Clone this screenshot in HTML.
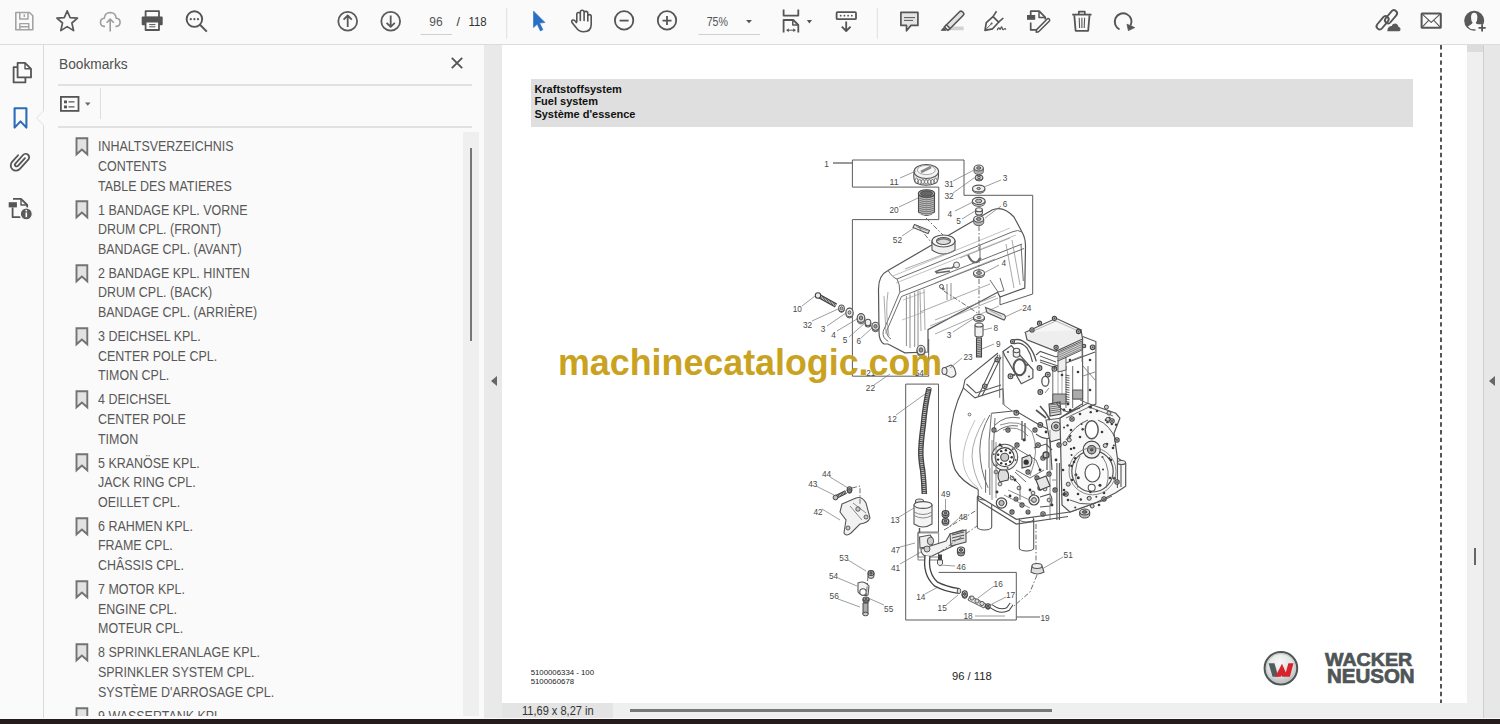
<!DOCTYPE html>
<html><head><meta charset="utf-8">
<style>
*{margin:0;padding:0;box-sizing:border-box}
html,body{width:1500px;height:724px;overflow:hidden;background:#fafafa;font-family:"Liberation Sans",sans-serif}
.abs{position:absolute}
svg{position:absolute;overflow:visible}
#toolbar{left:0;top:0;width:1500px;height:45px;background:#fafafa;border-bottom:1.5px solid #dcdcdc;z-index:5}
#rail{left:0;top:44px;width:44px;height:674px;background:#fafafa;border-right:1px solid #dadada}
#panel{left:44px;top:44px;width:440px;height:672px;background:#fafafa;overflow:hidden}
#divL{left:484px;top:44px;width:18px;height:674px;background:#e9e9e9}
#page{left:502px;top:44px;width:965px;height:659px;background:#fff;overflow:hidden}
#status{left:502px;top:703px;width:965px;height:15px;background:#efefef}
#vscroll{left:1467px;top:44px;width:17px;height:674px;background:#efefef;border-right:1px solid #cfcfcf}
#divR{left:1484px;top:44px;width:16px;height:674px;background:#e7e7e7}
#taskbar{left:0;top:718.5px;width:1500px;height:6px;background:#251b1c}
.bm{position:absolute;left:53.7px;font-size:14px;line-height:19.6px;color:#585858;white-space:nowrap;transform:scaleX(0.89);transform-origin:0 0}
.bmi{left:31px}
.ic{stroke:#666;fill:none;stroke-width:1.8}
</style></head><body>
<div id="toolbar" class="abs">
<svg style="left:0;top:0" width="1500" height="44" viewBox="0 0 1500 44">
<g fill="none" stroke-linejoin="round" stroke-linecap="butt">
<!-- save (disabled) -->
<path d="M15.8 12.5H29.5L32.8 15.8V29.8H15.8Z" stroke="#a3a3a3" stroke-width="1.6"/>
<path d="M19.8 12.5V18.9H28V12.5" stroke="#a3a3a3" stroke-width="1.5"/>
<path d="M24.3 14.3V17" stroke="#a3a3a3" stroke-width="1.5"/>
<path d="M19.8 29.8V23.6H28.8V29.8M19.8 26.7H28.8" stroke="#a3a3a3" stroke-width="1.4"/>
<!-- star -->
<path d="M67.2 10.8L70.1 17.6L77.5 18.1L71.9 23.0L73.6 30.6L67.2 26.6L60.8 30.6L62.5 23.0L56.9 18.1L64.3 17.6Z" stroke="#5a5a5a" stroke-width="1.7"/>
<!-- cloud upload -->
<path d="M105 26.4H104Q100.5 26.2 100.5 22.3Q100.6 18.6 104.2 18.3Q104.8 12.6 110.2 12.5Q115.7 12.6 116.3 18.3Q120 18.6 120.1 22.3Q120 26.2 116.5 26.4H115.5" stroke="#9d9d9d" stroke-width="1.6"/>
<path d="M110.2 31.6V19.2M106.6 22.7L110.2 19.1L113.8 22.7" stroke="#9d9d9d" stroke-width="1.6"/>
<!-- print -->
<rect x="145.6" y="11.2" width="13.4" height="6.4" stroke="#555" stroke-width="1.8"/>
<rect x="141.7" y="16.4" width="21" height="8.8" rx="1" fill="#555" stroke="none"/>
<rect x="145.6" y="21.6" width="13.4" height="8.4" fill="#fafafa" stroke="#555" stroke-width="1.8"/>
<path d="M149.2 24.6H155.4M149.2 26.8H155.4" stroke="#555" stroke-width="1"/>
<!-- search dots -->
<circle cx="194.4" cy="19.1" r="7.8" stroke="#555" stroke-width="1.9"/>
<path d="M200 24.8L206.8 31.6" stroke="#555" stroke-width="2"/>
<circle cx="190.8" cy="19.2" r="1.1" fill="#555" stroke="none"/>
<circle cx="194.4" cy="19.2" r="1.1" fill="#555" stroke="none"/>
<circle cx="198" cy="19.2" r="1.1" fill="#555" stroke="none"/>
<!-- up/down -->
<circle cx="347.7" cy="21.2" r="9.4" stroke="#5a5a5a" stroke-width="1.8"/>
<path d="M347.7 27V15.6M343.6 19.6L347.7 15.5L351.8 19.6" stroke="#5a5a5a" stroke-width="1.8"/>
<circle cx="390.7" cy="21.2" r="9.4" stroke="#5a5a5a" stroke-width="1.8"/>
<path d="M390.7 15.4V26.8M386.6 22.8L390.7 26.9L394.8 22.8" stroke="#5a5a5a" stroke-width="1.8"/>
<!-- page input -->
<path d="M420.7 34.5H452" stroke="#cfcfcf" stroke-width="1"/>
<path d="M506.7 8V38.7" stroke="#e0e0e0" stroke-width="1"/>
<!-- arrow cursor -->
<path d="M533.5 11L545 22.5L539.6 23.1L542.9 29.7L540.4 30.9L537.2 24.2L533.5 27.6Z" fill="#2a6fc4" stroke="#2a6fc4" stroke-width="0.6"/>
<!-- hand -->
<path d="M576.8 22V14.3A1.75 1.75 0 0 1 580.3 14.3V20.5V12.2A1.9 1.9 0 0 1 584.1 12.2V20.5V13.2A1.85 1.85 0 0 1 587.8 13.2V21V16.3A1.7 1.7 0 0 1 591.2 16.3V24.5Q591.2 31.8 583.6 31.8Q578.6 31.8 576 27.4L572 22.5Q571 20.6 572.9 20Q574.8 19.5 576.8 23.2" stroke="#555" stroke-width="1.6"/>
<!-- zoom out / in -->
<circle cx="624.1" cy="20.4" r="9.2" stroke="#555" stroke-width="1.8"/>
<path d="M619.6 20.6H628.6" stroke="#555" stroke-width="1.8"/>
<circle cx="667" cy="20.4" r="9.2" stroke="#555" stroke-width="1.8"/>
<path d="M662.5 20.6H671.5M667 16.1V25.1" stroke="#555" stroke-width="1.8"/>
<!-- zoom combo -->
<path d="M698.7 34.5H760" stroke="#cfcfcf" stroke-width="1"/>
<path d="M746 20H752L749 23.2Z" fill="#555" stroke="none"/>
<!-- fit page -->
<path d="M783.6 9.5V15.6H798.3V9.5" stroke="#555" stroke-width="1.8"/>
<path d="M783.6 32.6V20H793.3L798.3 25V32.6" stroke="#555" stroke-width="1.8"/>
<path d="M792.8 20.2V24.9H798" stroke="#555" stroke-width="1.5"/>
<path d="M787.2 30.2H794.8" stroke="#555" stroke-width="1"/>
<path d="M786.5 30.2L788.5 28.8V31.6Z M795.5 30.2L793.5 28.8V31.6Z" fill="#555" stroke="#555" stroke-width="0.6"/>
<path d="M806.8 20H812L809.4 23.4Z" fill="#555" stroke="none"/>
<!-- scroll -->
<rect x="836.6" y="12.2" width="19.4" height="7" rx="1" stroke="#555" stroke-width="1.8"/>
<g fill="#555" stroke="none"><circle cx="840.7" cy="15.7" r="0.9"/><circle cx="844.4" cy="15.7" r="0.9"/><circle cx="848.1" cy="15.7" r="0.9"/><circle cx="851.8" cy="15.7" r="0.9"/></g>
<path d="M846.2 21.4V30.8M841.8 26.6L846.2 31L850.6 26.6" stroke="#555" stroke-width="1.8"/>
<path d="M877.3 8V38.7" stroke="#e0e0e0" stroke-width="1"/>
<!-- comment -->
<path d="M900.9 12.3H917.9V25.4H911L906.5 30.8V25.4H900.9Z" fill="#e4e4e4" stroke="#555" stroke-width="1.7"/>
<path d="M904 17.6H915M904 20.4H913" stroke="#555" stroke-width="1"/>
<!-- highlighter -->
<path d="M947.5 30.2L963.6 30.2V26.4H951.4Z" fill="#d2d2d2" stroke="none"/>
<path d="M946.5 24.8L959.6 11.7Q961 10.4 962.3 11.7L963.4 12.8Q964.6 14 963.3 15.3L950.2 28.5Z" fill="#e2e2e2" stroke="#555" stroke-width="1.6"/>
<path d="M946.5 24.8L944.4 26.9L947.8 30.3L950.2 28.5" stroke="#555" stroke-width="1.6"/>
<path d="M943.6 27.6L941.2 30.4H946.2Z" fill="#555" stroke="#555" stroke-width="0.8"/>
<!-- pen sign -->
<path d="M985 30.3L986.3 22.6L993 16.6L998.6 22.2L992.6 28.8Z" stroke="#555" stroke-width="1.7"/>
<path d="M993 16.6L996.5 11.3M998.6 22.2L1003.3 18" stroke="#555" stroke-width="1.6"/>
<path d="M985.3 30L991.2 24" stroke="#555" stroke-width="1"/>
<circle cx="991.6" cy="23.4" r="1" fill="#555" stroke="none"/>
<path d="M997.2 30.2Q998.6 26.6 999.6 28.6Q1000.2 30.4 1001 27.6Q1001.8 25.8 1002.4 28.8Q1003 30.6 1004.4 28.8Q1005.2 28 1005.8 29.6" stroke="#555" stroke-width="1.2"/>
<!-- edit pdf -->
<path d="M1030.7 15V11.2H1039.2L1045.3 17.3V19.5" stroke="#555" stroke-width="1.7"/>
<path d="M1039 11.5V17.6H1045" stroke="#555" stroke-width="1.5"/>
<path d="M1030.7 22.6V29.9H1036.4" stroke="#555" stroke-width="1.7"/>
<rect x="1027" y="15" width="8.2" height="4.8" fill="#555" stroke="none"/>
<path d="M1036.6 29.6L1047.2 19Q1048.2 18 1049.2 19L1049.4 19.2Q1050.2 20.2 1049.2 21.2L1038.6 31.8L1036.2 32.2Z" stroke="#555" stroke-width="1.5"/>
<!-- trash -->
<path d="M1072.2 14.6H1091.5" stroke="#555" stroke-width="1.8"/>
<path d="M1078.8 14.2V11.6H1084.8V14.2" stroke="#555" stroke-width="1.7"/>
<path d="M1074.3 15.2L1075.6 30.8H1088.2L1089.5 15.2" stroke="#555" stroke-width="1.8"/>
<path d="M1079.2 17.8L1079.6 28M1081.9 17.8V28M1084.6 17.8L1084.2 28" stroke="#555" stroke-width="1.1"/>
<!-- rotate -->
<path d="M1119.5 29.3A8.4 8.4 0 1 1 1130.6 25.6" stroke="#555" stroke-width="1.9"/>
<path d="M1127 24.2L1134.7 27.6L1128.4 30.6Z" fill="#555" stroke="#555" stroke-width="0.8"/>
<!-- link cloud -->
<rect x="-7.6" y="-3.1" width="15.2" height="6.2" rx="3.1" transform="translate(1391 16.8) rotate(-50)" stroke="#555" stroke-width="1.9"/>
<rect x="-7.6" y="-3.1" width="15.2" height="6.2" rx="3.1" transform="translate(1382.6 22.8) rotate(-50)" stroke="#555" stroke-width="1.9"/>
<path d="M1387.4 31.3H1399.2Q1400.8 31 1400.5 28.8Q1400.2 26.9 1398.5 27Q1398 23.5 1394.8 23.5Q1392.2 23.7 1391.7 26Q1388.6 25.8 1387.8 28.5Q1387.2 30.4 1387.4 31.3Z" fill="#5a5a5a" stroke="none"/>
<!-- mail -->
<rect x="1421.6" y="13.4" width="19.2" height="14.4" rx="0.6" stroke="#555" stroke-width="2"/>
<path d="M1422 13.8L1431.2 22.4L1440.4 13.8M1422.2 27.2L1428.6 20.4M1440.2 27.2L1433.8 20.4" stroke="#555" stroke-width="1.1"/>
<!-- user add -->
<circle cx="1474.2" cy="20.8" r="10" fill="#595959" stroke="none"/>
<path d="M1474.2 12.8Q1477.2 12.8 1477.4 17.2Q1477.4 21 1475.8 22.6Q1476.2 24.4 1480.5 26.4Q1478 29.5 1474.2 29.2Q1470 29.5 1467.9 26.4Q1472.2 24.4 1472.6 22.6Q1471 21 1471 17.2Q1471.2 12.8 1474.2 12.8Z" fill="#fafafa" stroke="none"/>
<path d="M1476 24.2A5.5 5.5 0 0 0 1487 31.2L1487 24.2Z" fill="#fafafa" stroke="none"/>
<path d="M1482.1 24.3V31.5M1478.5 27.9H1485.7" stroke="#555" stroke-width="1.8"/>
</g>
<text x="429.3" y="26" font-family="Liberation Sans" font-size="12" fill="#555">96</text>
<text x="456.5" y="26.2" font-family="Liberation Sans" font-size="12.5" fill="#333">/</text>
<text x="468.5" y="26.2" font-family="Liberation Sans" font-size="12.5" fill="#333" textLength="18.2" lengthAdjust="spacingAndGlyphs">118</text>
<text x="706.7" y="25.6" font-family="Liberation Sans" font-size="12" fill="#555" textLength="21.3" lengthAdjust="spacingAndGlyphs">75%</text>
</svg>
</div>
<div id="rail" class="abs">
<svg style="left:0;top:0" width="44" height="240" viewBox="0 44 44 240">
<g fill="none" stroke="#555" stroke-width="1.8" stroke-linejoin="round">
<path d="M17.6 62.8H25L31 68.8V77.4H17.6Z"/>
<path d="M25 63V68.8H30.8" stroke-width="1.4"/>
<path d="M17.4 67.2H13.6V82.4H25.4V77.8"/>
<path d="M14.6 108.2H26.4V127.6L20.5 121.4L14.6 127.6Z" stroke="#2d6db8" stroke-width="2.1"/>
<path d="M5.5 5.5V16A1.75 1.75 0 0 1 2 16V4.5A3.5 3.5 0 0 1 9 4.5V17A5.25 5.25 0 0 1 -1.5 17V8" transform="translate(20 161) rotate(42) translate(-3.75 -11)" stroke-width="1.8" stroke-linecap="round"/>
<path d="M13 198.8H21L27.2 205V208"/>
<path d="M21 199V205H27" stroke-width="1.4"/>
<path d="M12.6 207.5V217.2H20.6"/>
</g>
<rect x="8.7" y="202.2" width="8.2" height="5.2" fill="#555"/>
<circle cx="26.3" cy="213.9" r="6" fill="#5a5a5a" stroke="#fafafa" stroke-width="1.2"/>
<path d="M26.3 212.4V217.2" stroke="#fff" stroke-width="1.6"/>
<circle cx="26.3" cy="210.6" r="0.9" fill="#fff"/>
</svg>
<svg style="left:35px;top:66px" width="9" height="16"><path d="M9 0.5L1.5 8L9 15.5" fill="#fafafa" stroke="#e2e2e2" stroke-width="1"/></svg>
</div>
<div id="panel" class="abs">
<div class="abs" style="left:15px;top:12px;font-size:14px;color:#4f4f4f;transform:scaleX(0.98);transform-origin:0 0">Bookmarks</div>
<svg style="left:407px;top:12.5px" width="12" height="12"><path d="M0.8 0.8L11.2 11.2M11.2 0.8L0.8 11.2" stroke="#555" stroke-width="1.9"/></svg>
<div class="abs" style="left:14px;top:39.5px;width:414px;height:2px;background:#e1e1e1"></div>
<svg style="left:16px;top:52px" width="34" height="17"><rect x="0.9" y="0.9" width="17.6" height="14" fill="none" stroke="#555" stroke-width="1.8"/><rect x="4" y="4.5" width="3" height="2.8" fill="#555"/><rect x="4" y="9.5" width="3" height="2.8" fill="#555"/><path d="M8.5 5.9H14.5M8.5 10.9H14.5" stroke="#555" stroke-width="1.3"/><path d="M25 6.5H30.5L27.75 9.7Z" fill="#666"/></svg>
<div class="abs" style="left:56px;top:44px;width:1px;height:31px;background:#dedede"></div>
<div class="abs" style="left:14px;top:81.5px;width:414px;height:2px;background:#e1e1e1"></div>
<div class="abs" style="left:419.4px;top:88px;width:15.4px;height:586px;background:#efefef"></div>
<div class="abs" style="left:426px;top:104px;width:2px;height:193px;background:#777"></div>
<svg class="bmi" style="top:93.2px" width="14" height="19" viewBox="0 0 14 19"><path d="M1.5 1.2H12.3V17.3L6.9 12.6L1.5 17.3Z" fill="#e2e2e2" stroke="#737373" stroke-width="1.9"/></svg>
<div class="bm" style="top:93.35px">INHALTSVERZEICHNIS<br>CONTENTS<br>TABLE DES MATIERES</div>
<svg class="bmi" style="top:156.4px" width="14" height="19" viewBox="0 0 14 19"><path d="M1.5 1.2H12.3V17.3L6.9 12.6L1.5 17.3Z" fill="#e2e2e2" stroke="#737373" stroke-width="1.9"/></svg>
<div class="bm" style="top:156.60px">1 BANDAGE KPL. VORNE<br>DRUM CPL. (FRONT)<br>BANDAGE CPL. (AVANT)</div>
<svg class="bmi" style="top:219.7px" width="14" height="19" viewBox="0 0 14 19"><path d="M1.5 1.2H12.3V17.3L6.9 12.6L1.5 17.3Z" fill="#e2e2e2" stroke="#737373" stroke-width="1.9"/></svg>
<div class="bm" style="top:219.85px">2 BANDAGE KPL. HINTEN<br>DRUM CPL. (BACK)<br>BANDAGE CPL. (ARRIÈRE)</div>
<svg class="bmi" style="top:282.9px" width="14" height="19" viewBox="0 0 14 19"><path d="M1.5 1.2H12.3V17.3L6.9 12.6L1.5 17.3Z" fill="#e2e2e2" stroke="#737373" stroke-width="1.9"/></svg>
<div class="bm" style="top:283.10px">3 DEICHSEL KPL.<br>CENTER POLE CPL.<br>TIMON CPL.</div>
<svg class="bmi" style="top:346.2px" width="14" height="19" viewBox="0 0 14 19"><path d="M1.5 1.2H12.3V17.3L6.9 12.6L1.5 17.3Z" fill="#e2e2e2" stroke="#737373" stroke-width="1.9"/></svg>
<div class="bm" style="top:346.35px">4 DEICHSEL<br>CENTER POLE<br>TIMON</div>
<svg class="bmi" style="top:409.4px" width="14" height="19" viewBox="0 0 14 19"><path d="M1.5 1.2H12.3V17.3L6.9 12.6L1.5 17.3Z" fill="#e2e2e2" stroke="#737373" stroke-width="1.9"/></svg>
<div class="bm" style="top:409.60px">5 KRANÖSE KPL.<br>JACK RING CPL.<br>OEILLET CPL.</div>
<svg class="bmi" style="top:472.7px" width="14" height="19" viewBox="0 0 14 19"><path d="M1.5 1.2H12.3V17.3L6.9 12.6L1.5 17.3Z" fill="#e2e2e2" stroke="#737373" stroke-width="1.9"/></svg>
<div class="bm" style="top:472.85px">6 RAHMEN KPL.<br>FRAME CPL.<br>CHÂSSIS CPL.</div>
<svg class="bmi" style="top:536.0px" width="14" height="19" viewBox="0 0 14 19"><path d="M1.5 1.2H12.3V17.3L6.9 12.6L1.5 17.3Z" fill="#e2e2e2" stroke="#737373" stroke-width="1.9"/></svg>
<div class="bm" style="top:536.10px">7 MOTOR KPL.<br>ENGINE CPL.<br>MOTEUR CPL.</div>
<svg class="bmi" style="top:599.2px" width="14" height="19" viewBox="0 0 14 19"><path d="M1.5 1.2H12.3V17.3L6.9 12.6L1.5 17.3Z" fill="#e2e2e2" stroke="#737373" stroke-width="1.9"/></svg>
<div class="bm" style="top:599.35px">8 SPRINKLERANLAGE KPL.<br>SPRINKLER SYSTEM CPL.<br>SYSTÈME D&#39;ARROSAGE CPL.</div>
<svg class="bmi" style="top:662.5px" width="14" height="19" viewBox="0 0 14 19"><path d="M1.5 1.2H12.3V17.3L6.9 12.6L1.5 17.3Z" fill="#e2e2e2" stroke="#737373" stroke-width="1.9"/></svg>
<div class="bm" style="top:662.60px">9 WASSERTANK KPL.</div>
</div>
<div id="divL" class="abs"><svg style="left:6.8px;top:332px" width="6" height="10"><path d="M6 0V10L0 5Z" fill="#666"/></svg></div>
<div id="page" class="abs"></div>
<div class="abs" style="left:530.6px;top:79px;width:882.7px;height:48px;background:#dfdfdf"></div>
<div class="abs" style="left:534.4px;top:82.7px;font-size:11px;line-height:12.8px;font-weight:bold;color:#111">Kraftstoffsystem<br>Fuel system<br>Système d&#39;essence</div>
<svg style="left:1440px;top:44px" width="2" height="659"><path d="M1 1V659" stroke="#555" stroke-width="2" stroke-dasharray="4.4 3.3"/></svg>
<div class="abs" style="left:530.7px;top:668px;font-size:7.8px;line-height:9.3px;color:#222">5100006334 - 100<br>5100060678</div>
<div class="abs" style="left:952px;top:670.2px;font-size:11.2px;line-height:12px;color:#222">96 / 118</div>
<div class="abs" style="left:1324.8px;top:651px;font-size:18.7px;line-height:17px;font-weight:bold;color:#4f5556;-webkit-text-stroke:0.7px #4f5556;transform:scaleX(1.05);transform-origin:0 0">WACKER</div>
<div class="abs" style="left:1326.7px;top:666.5px;font-size:19.5px;line-height:18px;font-weight:bold;color:#4f5556;-webkit-text-stroke:0.7px #4f5556;transform:scaleX(1.05);transform-origin:0 0">NEUSON</div>
<svg style="left:0;top:0" width="1500" height="724" viewBox="0 0 1500 724">
<defs><radialGradient id="rg" cx="0.45" cy="0.3" r="0.75"><stop offset="0" stop-color="#f7f7f7"/><stop offset="0.6" stop-color="#dcdfdf"/><stop offset="1" stop-color="#a9adae"/></radialGradient>
<clipPath id="wc"><rect x="1260" y="663.3" width="40" height="13.4"/></clipPath></defs>
<circle cx="1280.9" cy="668.2" r="16.3" fill="url(#rg)" stroke="#505556" stroke-width="2"/>
<circle cx="1280.9" cy="668.2" r="14.6" fill="none" stroke="#c4c7c8" stroke-width="1"/>
<g clip-path="url(#wc)">
<path d="M1270.6 660L1276.4 680" stroke="#545a5b" stroke-width="5.6" fill="none"/>
<path d="M1276.4 680L1281.8 669.5L1286.4 680L1291.8 660" stroke="#d8232a" stroke-width="5" fill="none" stroke-linejoin="miter" stroke-miterlimit="10"/>
</g>
</svg>

<svg style="left:0;top:0" width="1500" height="724" viewBox="0 0 1500 724" font-family="Liberation Sans">
<path d="M833 163H852.4M852.4 187.1V160H964V195.3H1032.7V294L1000 304.8V292" fill="none" stroke="#555" stroke-width="0.96" />
<path d="M852.4 187.1H938.8V219.6H852.4V376.2H928.7V339" fill="none" stroke="#555" stroke-width="0.96" />
<path d="M905.7 384.1H938.5V532M905.7 384.1V620H1016.3V572.4H938.6" fill="none" stroke="#555" stroke-width="0.96" />
<path d="M1016.3 617H1040" fill="none" stroke="#777" stroke-width="0.72" />
<path d="M918 532.9H938.6V558.3M918 532.9V560H938.6" fill="none" stroke="#666" stroke-width="0.84" />
<path d="M914 172Q913 180 916 183Q926 187.5 936 183Q939 180 938.5 172Z" fill="#e6e6e6" stroke="#555" stroke-width="1.08"/>
<ellipse cx="916.5" cy="180.5" rx="1.5" ry="2.3" fill="#fafafa" stroke="#666" stroke-width="0.84"/>
<ellipse cx="919.7" cy="181.8" rx="1.5" ry="2.3" fill="#fafafa" stroke="#666" stroke-width="0.84"/>
<ellipse cx="922.9" cy="181.8" rx="1.5" ry="2.3" fill="#fafafa" stroke="#666" stroke-width="0.84"/>
<ellipse cx="926.1" cy="181.8" rx="1.5" ry="2.3" fill="#fafafa" stroke="#666" stroke-width="0.84"/>
<ellipse cx="929.3" cy="181.8" rx="1.5" ry="2.3" fill="#fafafa" stroke="#666" stroke-width="0.84"/>
<ellipse cx="932.5" cy="181.8" rx="1.5" ry="2.3" fill="#fafafa" stroke="#666" stroke-width="0.84"/>
<ellipse cx="935.7" cy="180.5" rx="1.5" ry="2.3" fill="#fafafa" stroke="#666" stroke-width="0.84"/>
<ellipse cx="926.3" cy="171.5" rx="12.3" ry="7" fill="#f2f2f2" stroke="#555" stroke-width="1.08"/>
<ellipse cx="926.3" cy="170" rx="9" ry="4.6" fill="#f8f8f8" stroke="#888" stroke-width="0.72"/>
<path d="M921 172L931 167" fill="none" stroke="#888" stroke-width="2.64" />
<path d="M918.5 194V212Q926.5 219 934.5 212V194Z" fill="#777" stroke="#444" stroke-width="1.08"/>
<path d="M918.8 197Q926.5 200.5 934.2 197" fill="none" stroke="#ccc" stroke-width="0.84" />
<path d="M918.8 199Q926.5 202.5 934.2 199" fill="none" stroke="#ccc" stroke-width="0.84" />
<path d="M918.8 201Q926.5 204.5 934.2 201" fill="none" stroke="#ccc" stroke-width="0.84" />
<path d="M918.8 203Q926.5 206.5 934.2 203" fill="none" stroke="#ccc" stroke-width="0.84" />
<path d="M918.8 205Q926.5 208.5 934.2 205" fill="none" stroke="#ccc" stroke-width="0.84" />
<path d="M918.8 207Q926.5 210.5 934.2 207" fill="none" stroke="#ccc" stroke-width="0.84" />
<path d="M918.8 209Q926.5 212.5 934.2 209" fill="none" stroke="#ccc" stroke-width="0.84" />
<path d="M918.8 211Q926.5 214.5 934.2 211" fill="none" stroke="#ccc" stroke-width="0.84" />
<path d="M918.8 213Q926.5 216.5 934.2 213" fill="none" stroke="#ccc" stroke-width="0.84" />
<ellipse cx="926.5" cy="193.5" rx="8.2" ry="3.8" fill="#aaa" stroke="#444" stroke-width="1.08"/>
<ellipse cx="926.5" cy="193.5" rx="6" ry="2.6" fill="#666" stroke="#444" stroke-width="0.96"/>
<path d="M914.5 224.5L929.5 230.5L928 233.5L913 227.5Z" fill="#f2f2f2" stroke="#555" stroke-width="1.08"/>
<path d="M916 226.5L927.5 231" fill="none" stroke="#777" stroke-width="0.72" />
<path d="M926 218 L943 235" fill="none" stroke="#666" stroke-width="0.96" stroke-dasharray="5 2 1.5 2"/>
<path d="M918 226 L935 247" fill="none" stroke="#666" stroke-width="0.96" stroke-dasharray="5 2 1.5 2"/>
<path d="M884 344Q879 341 879 332L878.5 289Q878.5 275 888 270.5L992 210Q1003 205 1014 217L1022 232Q1025.5 238 1025.5 246L1024.8 288L1000 297L997.6 292.3L928 329.6L928 352L904.8 352.8L888 344Z" fill="#fff" stroke="#555" stroke-width="1.20" />
<path d="M888 270.5Q893 278 897 279L1012 232Q1018 229 1022 232" fill="none" stroke="#666" stroke-width="0.96" />
<path d="M897 279Q900 284 899.8 292.3" fill="none" stroke="#666" stroke-width="0.96" />
<path d="M899.8 292.3L1022 244M901.5 296.5L1024 248.5" fill="none" stroke="#666" stroke-width="0.96" />
<path d="M899.8 292.3L883.2 331.3Q882 338 888.2 341.2M901.5 296.5L887 330Q886 336 891 339" fill="none" stroke="#666" stroke-width="0.96" />
<path d="M906.4 296V346M910 294.5V348M914.7 292.5V347M918 291V346" fill="none" stroke="#777" stroke-width="0.84" />
<path d="M920 290.5L921 331M924 289L925 330" fill="none" stroke="#888" stroke-width="0.72" />
<path d="M905 269L955 250M960 258L1010 238M935 283L995 259" fill="none" stroke="#888" stroke-width="0.72" />
<path d="M920 312L990 284M935 320L996 296" fill="none" stroke="#888" stroke-width="0.72" />
<path d="M932 241V250Q943.5 258 955 250V241Z" fill="#f0f0f0" stroke="#555" stroke-width="1.08"/>
<ellipse cx="943.5" cy="241" rx="11.5" ry="6" fill="#f6f6f6" stroke="#555" stroke-width="1.08"/>
<ellipse cx="943.5" cy="241" rx="7" ry="3.5" fill="#ddd" stroke="#555" stroke-width="1.08"/>
<path d="M937 240.5Q943.5 237 950 240.5" stroke="#777" stroke-width="1.44" fill="none"/>
<path d="M935 272Q943 268 952 268L957 264M936 273Q944 272 950 271" fill="none" stroke="#666" stroke-width="1.68" />
<circle cx="956.5" cy="265" r="3" fill="#eee" stroke="#555" stroke-width="0.96"/>
<path d="M968 255Q972 264 977 262L981 258" fill="none" stroke="#666" stroke-width="1.92" />
<path d="M980 245V258" fill="none" stroke="#666" stroke-width="0.96" />
<path d="M973.5 273V274.5A5.5 3.2 0 0 0 984.5 274.5V273" fill="#ddd" stroke="#555" stroke-width="0.96"/>
<ellipse cx="979" cy="273" rx="5.5" ry="3.2" fill="#f2f2f2" stroke="#555" stroke-width="1.08"/>
<ellipse cx="979" cy="273" rx="2.475" ry="1.4400000000000002" fill="#bbb" stroke="#555" stroke-width="0.96"/>
<path d="M990 280L998 292L1004 290.7L1000 278" fill="none" stroke="#666" stroke-width="0.96" />
<path d="M940 285L944 290" fill="none" stroke="#777" stroke-width="2.64" />
<circle cx="941.5" cy="286.5" r="2" fill="#eee" stroke="#555" stroke-width="0.96"/>
<path d="M944 291 L979 314" fill="none" stroke="#666" stroke-width="0.96" stroke-dasharray="5 2 1.5 2"/>
<path d="M1021 244L1023.3 281" fill="none" stroke="#666" stroke-width="0.96" />
<path d="M884 296L886 334M888 292Q885 310 889 336" fill="none" stroke="#888" stroke-width="0.72" />
<path d="M893 276L1010 228M896 283L1016 235" fill="none" stroke="#999" stroke-width="0.60" />
<path d="M930 326L998 298M935 334L999 306" fill="none" stroke="#888" stroke-width="0.72" />
<path d="M903 300L925 292M902 320L924 312" fill="none" stroke="#999" stroke-width="0.60" />
<path d="M1012 240L1020 285M1006 244L1014 288" fill="none" stroke="#888" stroke-width="0.72" />
<path d="M947 284V300M951 283V299" fill="none" stroke="#777" stroke-width="0.84" />
<path d="M974.1 168V171.4A4.6 3 0 0 0 983.3000000000001 171.4V168" fill="#b4b4b4" stroke="#555" stroke-width="0.96"/>
<ellipse cx="978.7" cy="168" rx="4.6" ry="3" fill="#e2e2e2" stroke="#555" stroke-width="1.08"/>
<ellipse cx="978.7" cy="168" rx="2.07" ry="1.35" fill="#999" stroke="#555" stroke-width="0.96"/>
<path d="M975.2 177.5V178.5A3.8 2.4 0 0 0 982.8 178.5V177.5" fill="#ddd" stroke="#555" stroke-width="0.96"/>
<ellipse cx="979" cy="177.5" rx="3.8" ry="2.4" fill="#f2f2f2" stroke="#555" stroke-width="1.08"/>
<ellipse cx="979" cy="177.5" rx="1.71" ry="1.08" fill="#bbb" stroke="#555" stroke-width="0.96"/>
<path d="M972.5 188.5V189.9A6.2 3.4 0 0 0 984.9000000000001 189.9V188.5" fill="#ddd" stroke="#555" stroke-width="0.96"/>
<ellipse cx="978.7" cy="188.5" rx="6.2" ry="3.4" fill="#f2f2f2" stroke="#555" stroke-width="1.08"/>
<ellipse cx="978.7" cy="188.5" rx="1.8599999999999999" ry="1.02" fill="#bbb" stroke="#555" stroke-width="0.96"/>
<path d="M972.3000000000001 201V202.8A6.4 3.6 0 0 0 985.1 202.8V201" fill="#ddd" stroke="#555" stroke-width="0.96"/>
<ellipse cx="978.7" cy="201" rx="6.4" ry="3.6" fill="#f2f2f2" stroke="#555" stroke-width="1.08"/>
<ellipse cx="978.7" cy="201" rx="3.2" ry="1.8" fill="#bbb" stroke="#555" stroke-width="0.96"/>
<path d="M975.6 209.8V213.0A3.4 2 0 0 0 982.4 213.0V209.8" fill="#f0f0f0" stroke="#555" stroke-width="1.08"/>
<ellipse cx="979" cy="209.8" rx="3.4" ry="2" fill="#f0f0f0" stroke="#555" stroke-width="1.08"/>
<path d="M973.7 219V222.4A5 3.2 0 0 0 983.7 222.4V219" fill="#b4b4b4" stroke="#555" stroke-width="0.96"/>
<ellipse cx="978.7" cy="219" rx="5" ry="3.2" fill="#e2e2e2" stroke="#555" stroke-width="1.08"/>
<ellipse cx="978.7" cy="219" rx="2.25" ry="1.4400000000000002" fill="#999" stroke="#555" stroke-width="0.96"/>
<path d="M979 226 L979 250" fill="none" stroke="#666" stroke-width="0.96" stroke-dasharray="5 2 1.5 2"/>
<path d="M979 258 L979 320" fill="none" stroke="#666" stroke-width="0.96" stroke-dasharray="5 2 1.5 2"/>
<path d="M818 295.5L836 305.5" stroke="#444" stroke-width="4.32" stroke-linecap="butt"/>
<path d="M818 295.5L836 305.5" stroke="#ddd" stroke-width="2.16" stroke-dasharray="0.8 0.8"/>
<circle cx="818" cy="295.5" r="2.7" fill="#eee" stroke="#444" stroke-width="1.08"/>
<path d="M838.7 308.3V309.1A2.8 3.3 0 0 0 844.3 309.1V308.3" fill="#ddd" stroke="#555" stroke-width="0.96"/>
<ellipse cx="841.5" cy="308.3" rx="2.8" ry="3.3" fill="#f2f2f2" stroke="#555" stroke-width="1.08"/>
<ellipse cx="841.5" cy="308.3" rx="1.26" ry="1.4849999999999999" fill="#bbb" stroke="#555" stroke-width="0.96"/>
<path d="M845.9 312.5V313.5A3.6 4.4 0 0 0 853.1 313.5V312.5" fill="#ddd" stroke="#555" stroke-width="0.96"/>
<ellipse cx="849.5" cy="312.5" rx="3.6" ry="4.4" fill="#f2f2f2" stroke="#555" stroke-width="1.08"/>
<ellipse cx="849.5" cy="312.5" rx="1.4400000000000002" ry="1.7600000000000002" fill="#bbb" stroke="#555" stroke-width="0.96"/>
<path d="M857.2 318V319.5A3.8 4.4 0 0 0 864.8 319.5V318" fill="#b4b4b4" stroke="#555" stroke-width="0.96"/>
<ellipse cx="861" cy="318" rx="3.8" ry="4.4" fill="#e2e2e2" stroke="#555" stroke-width="1.08"/>
<ellipse cx="861" cy="318" rx="1.71" ry="1.9800000000000002" fill="#999" stroke="#555" stroke-width="0.96"/>
<path d="M865.2 322.5V323.7A2.8 3.3 0 0 0 870.8 323.7V322.5" fill="#eee" stroke="#555" stroke-width="1.08"/>
<ellipse cx="868" cy="322.5" rx="2.8" ry="3.3" fill="#eee" stroke="#555" stroke-width="1.08"/>
<path d="M871.9 326.3V327.8A3.6 4 0 0 0 879.1 327.8V326.3" fill="#b4b4b4" stroke="#555" stroke-width="0.96"/>
<ellipse cx="875.5" cy="326.3" rx="3.6" ry="4" fill="#e2e2e2" stroke="#555" stroke-width="1.08"/>
<ellipse cx="875.5" cy="326.3" rx="1.62" ry="1.8" fill="#999" stroke="#555" stroke-width="0.96"/>
<path d="M917 350V351.6A4 4.8 0 0 0 925 351.6V350" fill="#b4b4b4" stroke="#555" stroke-width="0.96"/>
<ellipse cx="921" cy="350" rx="4" ry="4.8" fill="#e2e2e2" stroke="#555" stroke-width="1.08"/>
<ellipse cx="921" cy="350" rx="1.8" ry="2.16" fill="#999" stroke="#555" stroke-width="0.96"/>
<path d="M985.5 307.5L1004 314.5Q1007 317 1004 320L987 312.5Z" fill="#e4e4e4" stroke="#555" stroke-width="1.08"/>
<path d="M989 310L1002 316.5" fill="none" stroke="#888" stroke-width="0.72" />
<path d="M973.5 317.5V319.0A5.5 3 0 0 0 984.5 319.0V317.5" fill="#ddd" stroke="#555" stroke-width="0.96"/>
<ellipse cx="979" cy="317.5" rx="5.5" ry="3" fill="#f2f2f2" stroke="#555" stroke-width="1.08"/>
<ellipse cx="979" cy="317.5" rx="1.9249999999999998" ry="1.0499999999999998" fill="#bbb" stroke="#555" stroke-width="0.96"/>
<path d="M975 325V335A4 2 0 0 0 983 335V325" fill="#f2f2f2" stroke="#555" stroke-width="1.08"/>
<ellipse cx="979" cy="325" rx="4" ry="2" fill="#f2f2f2" stroke="#555" stroke-width="1.08"/>
<path d="M976.5 338H981.5V357H976.5Z" fill="#bbb" stroke="#444" stroke-width="1.08"/>
<path d="M976.5 340.0L981.5 341.0" fill="none" stroke="#444" stroke-width="0.72" />
<path d="M976.5 342.2L981.5 343.2" fill="none" stroke="#444" stroke-width="0.72" />
<path d="M976.5 344.4L981.5 345.4" fill="none" stroke="#444" stroke-width="0.72" />
<path d="M976.5 346.6L981.5 347.6" fill="none" stroke="#444" stroke-width="0.72" />
<path d="M976.5 348.8L981.5 349.8" fill="none" stroke="#444" stroke-width="0.72" />
<path d="M976.5 351.0L981.5 352.0" fill="none" stroke="#444" stroke-width="0.72" />
<path d="M976.5 353.2L981.5 354.2" fill="none" stroke="#444" stroke-width="0.72" />
<path d="M976.5 355.4L981.5 356.4" fill="none" stroke="#444" stroke-width="0.72" />
<path d="M944 368L951 365Q955 367 955.5 372L956 374Q954 378 950 377L944 374Z" fill="#f2f2f2" stroke="#555" stroke-width="1.08"/>
<ellipse cx="944.5" cy="371" rx="2.5" ry="3.5" fill="#eee" stroke="#555" stroke-width="1.08"/>
<path d="M833 163L852 163" stroke="#777" stroke-width="0.72"/>
<path d="M900 178L916 171" stroke="#777" stroke-width="0.72"/>
<path d="M953 181L974 170" stroke="#777" stroke-width="0.72"/>
<path d="M953 193L974 178" stroke="#777" stroke-width="0.72"/>
<path d="M1001 180L984 187" stroke="#777" stroke-width="0.72"/>
<path d="M899 207L918 198" stroke="#777" stroke-width="0.72"/>
<path d="M955 211L973 202" stroke="#777" stroke-width="0.72"/>
<path d="M962 219L975 211" stroke="#777" stroke-width="0.72"/>
<path d="M1001 206L985 218" stroke="#777" stroke-width="0.72"/>
<path d="M902 236L914 228" stroke="#777" stroke-width="0.72"/>
<path d="M999 265L984 273" stroke="#777" stroke-width="0.72"/>
<path d="M802 306L815 296" stroke="#777" stroke-width="0.72"/>
<path d="M812 321L838 309" stroke="#777" stroke-width="0.72"/>
<path d="M827 326L846 313" stroke="#777" stroke-width="0.72"/>
<path d="M837 331L857 319" stroke="#777" stroke-width="0.72"/>
<path d="M849 337L865 323" stroke="#777" stroke-width="0.72"/>
<path d="M861 338L872 328" stroke="#777" stroke-width="0.72"/>
<path d="M1022 309L1005 317" stroke="#777" stroke-width="0.72"/>
<path d="M953 332L973 319" stroke="#777" stroke-width="0.72"/>
<path d="M992 328L983 330" stroke="#777" stroke-width="0.72"/>
<path d="M994 344L982 349" stroke="#777" stroke-width="0.72"/>
<path d="M962 358L950 368" stroke="#777" stroke-width="0.72"/>
<path d="M874 385L890 374" stroke="#777" stroke-width="0.72"/>
<path d="M896 415L925 394" stroke="#777" stroke-width="0.72"/>
<path d="M830 477L848 488" stroke="#777" stroke-width="0.72"/>
<path d="M816 486L834 495" stroke="#777" stroke-width="0.72"/>
<path d="M822 509L840 520" stroke="#777" stroke-width="0.72"/>
<path d="M899 517L914 508" stroke="#777" stroke-width="0.72"/>
<path d="M958 519L948 528" stroke="#777" stroke-width="0.72"/>
<path d="M900 547L915 543" stroke="#777" stroke-width="0.72"/>
<path d="M1063 557L1042 569" stroke="#777" stroke-width="0.72"/>
<path d="M848 560L866 571" stroke="#777" stroke-width="0.72"/>
<path d="M900 564L921 552" stroke="#777" stroke-width="0.72"/>
<path d="M955 566L940 565" stroke="#777" stroke-width="0.72"/>
<path d="M838 578L857 586" stroke="#777" stroke-width="0.72"/>
<path d="M994 586L978 598" stroke="#777" stroke-width="0.72"/>
<path d="M925 594L940 586" stroke="#777" stroke-width="0.72"/>
<path d="M1006 597L990 605" stroke="#777" stroke-width="0.72"/>
<path d="M838 599L860 607" stroke="#777" stroke-width="0.72"/>
<path d="M946 605L958 595" stroke="#777" stroke-width="0.72"/>
<path d="M884 605L868 598" stroke="#777" stroke-width="0.72"/>
<path d="M975 616L1005 616" stroke="#777" stroke-width="0.72"/>
<path d="M1016 617L1040 617" stroke="#777" stroke-width="0.72"/>
<text x="826.6" y="166.5" text-anchor="middle" font-size="9.6" textLength="4.6" lengthAdjust="spacingAndGlyphs" fill="#4a4a4a">1</text>
<text x="894" y="184.5" text-anchor="middle" font-size="9.6" textLength="9.2" lengthAdjust="spacingAndGlyphs" fill="#4a4a4a">11</text>
<text x="949" y="186.5" text-anchor="middle" font-size="9.6" textLength="9.2" lengthAdjust="spacingAndGlyphs" fill="#4a4a4a">31</text>
<text x="1005" y="181.1" text-anchor="middle" font-size="9.6" textLength="4.6" lengthAdjust="spacingAndGlyphs" fill="#4a4a4a">3</text>
<text x="949" y="199.1" text-anchor="middle" font-size="9.6" textLength="9.2" lengthAdjust="spacingAndGlyphs" fill="#4a4a4a">32</text>
<text x="894" y="212.9" text-anchor="middle" font-size="9.6" textLength="9.2" lengthAdjust="spacingAndGlyphs" fill="#4a4a4a">20</text>
<text x="949.8" y="216.7" text-anchor="middle" font-size="9.6" textLength="4.6" lengthAdjust="spacingAndGlyphs" fill="#4a4a4a">4</text>
<text x="958.5" y="224.3" text-anchor="middle" font-size="9.6" textLength="4.6" lengthAdjust="spacingAndGlyphs" fill="#4a4a4a">5</text>
<text x="1005" y="207.0" text-anchor="middle" font-size="9.6" textLength="4.6" lengthAdjust="spacingAndGlyphs" fill="#4a4a4a">6</text>
<text x="897.4" y="243.2" text-anchor="middle" font-size="9.6" textLength="9.2" lengthAdjust="spacingAndGlyphs" fill="#4a4a4a">52</text>
<text x="1003.7" y="265.7" text-anchor="middle" font-size="9.6" textLength="4.6" lengthAdjust="spacingAndGlyphs" fill="#4a4a4a">4</text>
<text x="797.3" y="312.3" text-anchor="middle" font-size="9.6" textLength="9.2" lengthAdjust="spacingAndGlyphs" fill="#4a4a4a">10</text>
<text x="807.6" y="327.8" text-anchor="middle" font-size="9.6" textLength="9.2" lengthAdjust="spacingAndGlyphs" fill="#4a4a4a">32</text>
<text x="823.1" y="332.3" text-anchor="middle" font-size="9.6" textLength="4.6" lengthAdjust="spacingAndGlyphs" fill="#4a4a4a">3</text>
<text x="1026.8" y="310.5" text-anchor="middle" font-size="9.6" textLength="9.2" lengthAdjust="spacingAndGlyphs" fill="#4a4a4a">24</text>
<text x="833.5" y="338.2" text-anchor="middle" font-size="9.6" textLength="4.6" lengthAdjust="spacingAndGlyphs" fill="#4a4a4a">4</text>
<text x="995.7" y="331.3" text-anchor="middle" font-size="9.6" textLength="4.6" lengthAdjust="spacingAndGlyphs" fill="#4a4a4a">8</text>
<text x="845" y="342.7" text-anchor="middle" font-size="9.6" textLength="4.6" lengthAdjust="spacingAndGlyphs" fill="#4a4a4a">5</text>
<text x="949" y="338.2" text-anchor="middle" font-size="9.6" textLength="4.6" lengthAdjust="spacingAndGlyphs" fill="#4a4a4a">3</text>
<text x="858.7" y="344.0" text-anchor="middle" font-size="9.6" textLength="4.6" lengthAdjust="spacingAndGlyphs" fill="#4a4a4a">6</text>
<text x="998.2" y="346.8" text-anchor="middle" font-size="9.6" textLength="4.6" lengthAdjust="spacingAndGlyphs" fill="#4a4a4a">9</text>
<text x="968.1" y="359.9" text-anchor="middle" font-size="9.6" textLength="9.2" lengthAdjust="spacingAndGlyphs" fill="#4a4a4a">23</text>
<text x="870.8" y="375.7" text-anchor="middle" font-size="9.6" textLength="9.2" lengthAdjust="spacingAndGlyphs" fill="#4a4a4a">21</text>
<text x="919.3" y="375.7" text-anchor="middle" font-size="9.6" textLength="9.2" lengthAdjust="spacingAndGlyphs" fill="#4a4a4a">54</text>
<text x="870.4" y="391.0" text-anchor="middle" font-size="9.6" textLength="9.2" lengthAdjust="spacingAndGlyphs" fill="#4a4a4a">22</text>
<text x="892.2" y="421.5" text-anchor="middle" font-size="9.6" textLength="9.2" lengthAdjust="spacingAndGlyphs" fill="#4a4a4a">12</text>
<text x="826.6" y="477.4" text-anchor="middle" font-size="9.6" textLength="9.2" lengthAdjust="spacingAndGlyphs" fill="#4a4a4a">44</text>
<text x="812.8" y="487.1" text-anchor="middle" font-size="9.6" textLength="9.2" lengthAdjust="spacingAndGlyphs" fill="#4a4a4a">43</text>
<text x="945.7" y="497.4" text-anchor="middle" font-size="9.6" textLength="9.2" lengthAdjust="spacingAndGlyphs" fill="#4a4a4a">49</text>
<text x="818" y="515.4" text-anchor="middle" font-size="9.6" textLength="9.2" lengthAdjust="spacingAndGlyphs" fill="#4a4a4a">42</text>
<text x="895" y="523.3" text-anchor="middle" font-size="9.6" textLength="9.2" lengthAdjust="spacingAndGlyphs" fill="#4a4a4a">13</text>
<text x="963" y="519.8" text-anchor="middle" font-size="9.6" textLength="9.2" lengthAdjust="spacingAndGlyphs" fill="#4a4a4a">48</text>
<text x="895.6" y="553.3" text-anchor="middle" font-size="9.6" textLength="9.2" lengthAdjust="spacingAndGlyphs" fill="#4a4a4a">47</text>
<text x="1068.2" y="557.8" text-anchor="middle" font-size="9.6" textLength="9.2" lengthAdjust="spacingAndGlyphs" fill="#4a4a4a">51</text>
<text x="843.9" y="560.5" text-anchor="middle" font-size="9.6" textLength="9.2" lengthAdjust="spacingAndGlyphs" fill="#4a4a4a">53</text>
<text x="895.6" y="570.5" text-anchor="middle" font-size="9.6" textLength="9.2" lengthAdjust="spacingAndGlyphs" fill="#4a4a4a">41</text>
<text x="961.2" y="569.9" text-anchor="middle" font-size="9.6" textLength="9.2" lengthAdjust="spacingAndGlyphs" fill="#4a4a4a">46</text>
<text x="833.5" y="579.2" text-anchor="middle" font-size="9.6" textLength="9.2" lengthAdjust="spacingAndGlyphs" fill="#4a4a4a">54</text>
<text x="998.2" y="586.5" text-anchor="middle" font-size="9.6" textLength="9.2" lengthAdjust="spacingAndGlyphs" fill="#4a4a4a">16</text>
<text x="1010.6" y="598.2" text-anchor="middle" font-size="9.6" textLength="9.2" lengthAdjust="spacingAndGlyphs" fill="#4a4a4a">17</text>
<text x="920.8" y="600.3" text-anchor="middle" font-size="9.6" textLength="9.2" lengthAdjust="spacingAndGlyphs" fill="#4a4a4a">14</text>
<text x="834.2" y="599.2" text-anchor="middle" font-size="9.6" textLength="9.2" lengthAdjust="spacingAndGlyphs" fill="#4a4a4a">56</text>
<text x="942.2" y="611.3" text-anchor="middle" font-size="9.6" textLength="9.2" lengthAdjust="spacingAndGlyphs" fill="#4a4a4a">15</text>
<text x="888.7" y="612.4" text-anchor="middle" font-size="9.6" textLength="9.2" lengthAdjust="spacingAndGlyphs" fill="#4a4a4a">55</text>
<text x="968.1" y="619.3" text-anchor="middle" font-size="9.6" textLength="9.2" lengthAdjust="spacingAndGlyphs" fill="#4a4a4a">18</text>
<text x="1045.1" y="621.0" text-anchor="middle" font-size="9.6" textLength="9.2" lengthAdjust="spacingAndGlyphs" fill="#4a4a4a">19</text>
<path d="M977.3 497V527A7.2 3 0 0 0 991.7 527V497" fill="#fff" stroke="#555" stroke-width="1.08"/>
<ellipse cx="984.5" cy="497" rx="7.2" ry="3" fill="#fff" stroke="#555" stroke-width="1.08"/>
<path d="M1019.3 519V548A7.2 3 0 0 0 1033.7 548V519" fill="#fff" stroke="#555" stroke-width="1.08"/>
<ellipse cx="1026.5" cy="519" rx="7.2" ry="3" fill="#fff" stroke="#555" stroke-width="1.08"/>
<path d="M965 379.6L998 353L1003 351.4L1011.3 345.6L1025.4 332.3L1056.1 318.3L1081 329.9L1095.9 341.5V404.5L1087.6 403.3L1115.8 413.3L1119.9 418.2L1114 433.2L1117.4 458L1125.7 463V486.2L1115.8 492.8L1095.9 502.8L1070 512L1016.3 519.3L978.2 496.1L978.2 489.5L955 469.6L950 441.4L960 400L963.3 387.9Z" fill="#fff" stroke="none" stroke-width="0.00"/>
<path d="M963.3 387.9Q951 412 950 441.4Q950.5 458 955 469.6Q962 482 978.2 489.5" fill="none" stroke="#555" stroke-width="1.20"/>
<path d="M989.8 415Q980 432 979.8 449.7Q980 470 988.1 487.8" fill="none" stroke="#666" stroke-width="0.96"/>
<path d="M985 418Q972 440 972 456Q973 474 982 489" fill="none" stroke="#888" stroke-width="0.72"/>
<path d="M975 420Q962 445 963 462Q965 478 978 488" fill="none" stroke="#999" stroke-width="0.60"/>
<path d="M965 379.6L998 353M965 379.6L963.3 387.9L974.9 397.8L1003 388.7M966.5 384L976 393L1001 385" fill="none" stroke="#555" stroke-width="1.08"/>
<path d="M998 354.7L978.2 396.2M1001 357L982 396" fill="none" stroke="#555" stroke-width="1.08"/>
<path d="M1003 388.7L1004 405L1012 411" fill="none" stroke="#666" stroke-width="0.96"/>
<circle cx="969.5" cy="414.5" r="1.4" fill="#fff" stroke="#555" stroke-width="0.84"/>
<circle cx="997.2" cy="359.7" r="2.2" fill="#cfcfcf" stroke="#444" stroke-width="1.08"/>
<circle cx="997.2" cy="359.7" r="0.9900000000000001" fill="#555"/>
<circle cx="984.8" cy="386.2" r="2.2" fill="#cfcfcf" stroke="#444" stroke-width="1.08"/>
<circle cx="984.8" cy="386.2" r="0.9900000000000001" fill="#555"/>
<path d="M999.7 354.7V397.8M1003 351.4V404.5" fill="none" stroke="#666" stroke-width="0.96"/>
<path d="M985.6 469.6V492.8M989.8 468V495" fill="none" stroke="#666" stroke-width="0.96"/>
<path d="M1003 351.4L1011.3 345.6L1032.9 369.6V378L1021.3 383.7L1004.7 355.6Z" fill="#f8f8f8" stroke="#555" stroke-width="1.20"/>
<ellipse cx="1019.6" cy="367.2" rx="6" ry="8" fill="#fff" stroke="#555" stroke-width="2.04"/>
<path d="M1013.3 350.5V355.0A3.2 2.2 0 0 0 1019.7 355.0V350.5" fill="#eee" stroke="#555" stroke-width="1.08"/>
<ellipse cx="1016.5" cy="350.5" rx="3.2" ry="2.2" fill="#eee" stroke="#555" stroke-width="1.08"/>
<circle cx="1008" cy="352" r="1.0" fill="#444"/>
<circle cx="1027" cy="365" r="1.0" fill="#444"/>
<circle cx="1029" cy="376.5" r="1.0" fill="#444"/>
<circle cx="1014" cy="375" r="1.0" fill="#444"/>
<path d="M1012.2 340.6Q1020 337 1028 345Q1034 352 1036.2 361.4M1013.5 344Q1021 341 1027 348Q1031 354 1032.5 362" fill="none" stroke="#555" stroke-width="1.32"/>
<circle cx="1012.5" cy="341.5" r="2" fill="#cfcfcf" stroke="#444" stroke-width="1.08"/>
<circle cx="1012.5" cy="341.5" r="0.9" fill="#555"/>
<path d="M1025.4 332.3L1056.1 318.3L1081 329.9L1057 345.6Z" fill="#f6f6f6" stroke="#555" stroke-width="1.20"/>
<path d="M1025.4 332.3L1027 339.8L1056 351.4L1082.6 339L1081 329.9M1057 345.6L1056 351.4" fill="#eee" stroke="#555" stroke-width="1.20"/>
<path d="M1031 332L1056 321L1076 330" fill="none" stroke="#999" stroke-width="0.72"/>
<circle cx="1032" cy="329.9" r="2.1" fill="#cfcfcf" stroke="#444" stroke-width="1.08"/>
<circle cx="1032" cy="329.9" r="0.9450000000000001" fill="#555"/>
<circle cx="1039.5" cy="323.2" r="2.1" fill="#cfcfcf" stroke="#444" stroke-width="1.08"/>
<circle cx="1039.5" cy="323.2" r="0.9450000000000001" fill="#555"/>
<circle cx="1054.4" cy="318.3" r="2.1" fill="#cfcfcf" stroke="#444" stroke-width="1.08"/>
<circle cx="1054.4" cy="318.3" r="0.9450000000000001" fill="#555"/>
<circle cx="1078.5" cy="331.5" r="2.1" fill="#cfcfcf" stroke="#444" stroke-width="1.08"/>
<circle cx="1078.5" cy="331.5" r="0.9450000000000001" fill="#555"/>
<circle cx="1056.1" cy="347.3" r="2.1" fill="#cfcfcf" stroke="#444" stroke-width="1.08"/>
<circle cx="1056.1" cy="347.3" r="0.9450000000000001" fill="#555"/>
<path d="M1036 355L1040.3 351.4L1056 357L1082.6 345" fill="none" stroke="#555" stroke-width="1.08"/>
<path d="M1082.6 336.5L1095.9 341.5V404.5M1082.6 339V404M1040 360L1058 366L1095 352" fill="none" stroke="#555" stroke-width="1.08"/>
<circle cx="1092.6" cy="347.3" r="2.3" fill="#cfcfcf" stroke="#444" stroke-width="1.08"/>
<circle cx="1092.6" cy="347.3" r="1.035" fill="#555"/>
<circle cx="1084" cy="346" r="1.8" fill="#cfcfcf" stroke="#444" stroke-width="1.08"/>
<circle cx="1084" cy="346" r="0.81" fill="#555"/>
<path d="M1052.8 366V408" fill="none" stroke="#666" stroke-width="0.96"/>
<path d="M1066 366V408" fill="none" stroke="#666" stroke-width="0.96"/>
<path d="M1072.7 366V408" fill="none" stroke="#666" stroke-width="0.96"/>
<path d="M1082.6 366V408" fill="none" stroke="#666" stroke-width="0.96"/>
<path d="M1088 366V408" fill="none" stroke="#666" stroke-width="0.96"/>
<path d="M1058 366V402M1062 368V404" fill="none" stroke="#888" stroke-width="0.72"/>
<path d="M1052.8 394H1066V404H1052.8Z" fill="#ddd" stroke="#555" stroke-width="0.96"/>
<path d="M1072.7 390H1082.6V399H1072.7Z" fill="#ddd" stroke="#555" stroke-width="0.96"/>
<path d="M1053 395H1066" fill="none" stroke="#555" stroke-width="0.72"/>
<path d="M1073 391H1082.5" fill="none" stroke="#555" stroke-width="0.72"/>
<path d="M1053 397H1066" fill="none" stroke="#555" stroke-width="0.72"/>
<path d="M1073 393H1082.5" fill="none" stroke="#555" stroke-width="0.72"/>
<path d="M1053 399H1066" fill="none" stroke="#555" stroke-width="0.72"/>
<path d="M1073 395H1082.5" fill="none" stroke="#555" stroke-width="0.72"/>
<path d="M1053 401H1066" fill="none" stroke="#555" stroke-width="0.72"/>
<path d="M1073 397H1082.5" fill="none" stroke="#555" stroke-width="0.72"/>
<path d="M1053 403H1066" fill="none" stroke="#555" stroke-width="0.72"/>
<path d="M1073 399H1082.5" fill="none" stroke="#555" stroke-width="0.72"/>
<path d="M1065.5 375.0L1069.5 375.8" fill="none" stroke="#444" stroke-width="0.84"/>
<path d="M1065.5 377.4L1069.5 378.2" fill="none" stroke="#444" stroke-width="0.84"/>
<path d="M1065.5 379.8L1069.5 380.6" fill="none" stroke="#444" stroke-width="0.84"/>
<path d="M1065.5 382.2L1069.5 383.0" fill="none" stroke="#444" stroke-width="0.84"/>
<path d="M1065.5 384.6L1069.5 385.40000000000003" fill="none" stroke="#444" stroke-width="0.84"/>
<path d="M1065.5 387.0L1069.5 387.8" fill="none" stroke="#444" stroke-width="0.84"/>
<path d="M1065.5 389.4L1069.5 390.2" fill="none" stroke="#444" stroke-width="0.84"/>
<path d="M1065.5 391.8L1069.5 392.6" fill="none" stroke="#444" stroke-width="0.84"/>
<path d="M1065.5 394.2L1069.5 395.0" fill="none" stroke="#444" stroke-width="0.84"/>
<path d="M1065.5 396.6L1069.5 397.40000000000003" fill="none" stroke="#444" stroke-width="0.84"/>
<path d="M1065.5 399.0L1069.5 399.8" fill="none" stroke="#444" stroke-width="0.84"/>
<path d="M1065.5 401.4L1069.5 402.2" fill="none" stroke="#444" stroke-width="0.84"/>
<path d="M1045 393L1049 388M1083 366L1095 380M1083 376L1095 372" fill="none" stroke="#777" stroke-width="0.84"/>
<ellipse cx="1045.3" cy="381.2" rx="3.5" ry="5" fill="#fff" stroke="#666" stroke-width="1.44"/>
<circle cx="1010.5" cy="376.3" r="2.4" fill="#cfcfcf" stroke="#444" stroke-width="1.08"/>
<circle cx="1010.5" cy="376.3" r="1.08" fill="#555"/>
<circle cx="1039.5" cy="368" r="2.4" fill="#cfcfcf" stroke="#444" stroke-width="1.08"/>
<circle cx="1039.5" cy="368" r="1.08" fill="#555"/>
<circle cx="1054.4" cy="368.8" r="2.4" fill="#cfcfcf" stroke="#444" stroke-width="1.08"/>
<circle cx="1054.4" cy="368.8" r="1.08" fill="#555"/>
<circle cx="1047.8" cy="374.6" r="2.4" fill="#cfcfcf" stroke="#444" stroke-width="1.08"/>
<circle cx="1047.8" cy="374.6" r="1.08" fill="#555"/>
<circle cx="1040.3" cy="392" r="2.4" fill="#cfcfcf" stroke="#444" stroke-width="1.08"/>
<circle cx="1040.3" cy="392" r="1.08" fill="#555"/>
<circle cx="1016.3" cy="412.7" r="2.4" fill="#cfcfcf" stroke="#444" stroke-width="1.08"/>
<circle cx="1016.3" cy="412.7" r="1.08" fill="#555"/>
<circle cx="1040.3" cy="424.9" r="2.4" fill="#cfcfcf" stroke="#444" stroke-width="1.08"/>
<circle cx="1040.3" cy="424.9" r="1.08" fill="#555"/>
<path d="M991.4 413.3L1015.5 410.8L1039.5 424.9L1050 430" fill="none" stroke="#555" stroke-width="1.08"/>
<path d="M991.4 413.3Q988 440 989 468M995 418Q993 440 994 466" fill="none" stroke="#666" stroke-width="0.96"/>
<path d="M1000 425Q1020 418 1032 432Q1040 450 1030 476M1003 430Q1018 424 1028 436" fill="none" stroke="#777" stroke-width="0.84"/>
<path d="M1022 421V440M1025 423V441" fill="none" stroke="#666" stroke-width="1.44"/>
<circle cx="1004.7" cy="457.2" r="13" fill="#f4f4f4" stroke="#555" stroke-width="1.08"/>
<circle cx="1004.7" cy="457.2" r="9.5" fill="#fff" stroke="#444" stroke-width="1.20"/>
<circle cx="1004.7" cy="457.2" r="4" fill="#ccc" stroke="#444" stroke-width="1.08"/>
<circle cx="1011.7" cy="457.2" r="1.2" fill="#333"/>
<circle cx="1010.0623111018328" cy="461.69951326780574" r="1.2" fill="#333"/>
<circle cx="1005.9155372436686" cy="464.0936542710854" r="1.2" fill="#333"/>
<circle cx="1001.2" cy="463.26217782649104" r="1.2" fill="#333"/>
<circle cx="998.1221516544987" cy="459.5941410032797" r="1.2" fill="#333"/>
<circle cx="998.1221516544987" cy="454.8058589967203" r="1.2" fill="#333"/>
<circle cx="1001.2" cy="451.13782217350894" r="1.2" fill="#333"/>
<circle cx="1005.9155372436686" cy="450.30634572891455" r="1.2" fill="#333"/>
<circle cx="1010.0623111018328" cy="452.70048673219424" r="1.2" fill="#333"/>
<circle cx="1015.6149618370665" cy="460.1246552096585" r="1.0" fill="#555"/>
<circle cx="1007.6246552096585" cy="468.11496183706646" r="1.0" fill="#555"/>
<circle cx="996.709693372592" cy="465.19030662740795" r="1.0" fill="#555"/>
<circle cx="993.7850381629336" cy="454.2753447903415" r="1.0" fill="#555"/>
<circle cx="1001.7753447903416" cy="446.2850381629335" r="1.0" fill="#555"/>
<circle cx="1012.6903066274081" cy="449.209693372592" r="1.0" fill="#555"/>
<path d="M1014 447L1036 460L1040 470M1016 470L1030 478L1044 470" fill="none" stroke="#666" stroke-width="0.96"/>
<path d="M1022 458L1030 455Q1034 460 1030 466L1022 468Z" fill="#e0e0e0" stroke="#444" stroke-width="1.08"/>
<circle cx="1026.2" cy="462.2" r="2.6" fill="#333"/>
<path d="M1046 420L1062 418L1064 438L1050 442Z" fill="#f0f0f0" stroke="#555" stroke-width="1.08"/>
<circle cx="1056" cy="426.5" r="4.5" fill="#ddd" stroke="#444" stroke-width="1.08"/>
<circle cx="1056" cy="426.5" r="2" fill="#888" stroke="#444" stroke-width="0.96"/>
<path d="M1036 434Q1044 440 1050 438M1034 448L1046 444L1052 450" fill="none" stroke="#555" stroke-width="1.08"/>
<circle cx="1038" cy="445" r="2.3" fill="#cfcfcf" stroke="#444" stroke-width="1.08"/>
<circle cx="1038" cy="445" r="1.035" fill="#555"/>
<circle cx="1043" cy="458" r="2.2" fill="#cfcfcf" stroke="#444" stroke-width="1.08"/>
<circle cx="1043" cy="458" r="0.9900000000000001" fill="#555"/>
<circle cx="1037" cy="478" r="2.1" fill="#cfcfcf" stroke="#444" stroke-width="1.08"/>
<circle cx="1037" cy="478" r="0.9450000000000001" fill="#555"/>
<circle cx="1046" cy="455" r="3" fill="#ccc" stroke="#444" stroke-width="1.32"/>
<circle cx="1000" cy="484" r="1.9" fill="#ddd" stroke="#555" stroke-width="0.96"/>
<circle cx="996" cy="472" r="1.9" fill="#ddd" stroke="#555" stroke-width="0.96"/>
<circle cx="1012" cy="478" r="1.9" fill="#ddd" stroke="#555" stroke-width="0.96"/>
<circle cx="1019" cy="488" r="1.9" fill="#ddd" stroke="#555" stroke-width="0.96"/>
<circle cx="1033" cy="493" r="1.9" fill="#ddd" stroke="#555" stroke-width="0.96"/>
<circle cx="1045" cy="489" r="1.9" fill="#ddd" stroke="#555" stroke-width="0.96"/>
<circle cx="1049" cy="500" r="1.9" fill="#ddd" stroke="#555" stroke-width="0.96"/>
<circle cx="1001.5" cy="503" r="5.2" fill="#f2f2f2" stroke="#444" stroke-width="1.20"/>
<circle cx="1001.5" cy="503" r="2.6" fill="#bbb" stroke="#444" stroke-width="0.96"/>
<circle cx="1034" cy="500" r="5" fill="#f2f2f2" stroke="#444" stroke-width="1.20"/>
<circle cx="1034" cy="500" r="2.4" fill="#ccc" stroke="#444" stroke-width="0.96"/>
<path d="M1040 497L1050 494Q1054 500 1050 506L1040 507" fill="none" stroke="#555" stroke-width="1.08"/>
<circle cx="1043" cy="514" r="2.2" fill="#cfcfcf" stroke="#444" stroke-width="1.08"/>
<circle cx="1043" cy="514" r="0.9900000000000001" fill="#555"/>
<circle cx="1028" cy="512" r="2.0" fill="#cfcfcf" stroke="#444" stroke-width="1.08"/>
<circle cx="1028" cy="512" r="0.9" fill="#555"/>
<circle cx="1016" cy="499" r="2" fill="#cfcfcf" stroke="#444" stroke-width="1.08"/>
<circle cx="1016" cy="499" r="0.9" fill="#555"/>
<path d="M1056.9 463V520M1059.4 463V520" fill="none" stroke="#555" stroke-width="1.08"/>
<path d="M1050 430V520M1052 480H1056" fill="none" stroke="#777" stroke-width="0.84"/>
<path d="M978.2 496.1L1016.3 519.3L1070 512L1095.9 502.8M978.2 500.5L1016.3 524L1068 516.5" fill="none" stroke="#555" stroke-width="1.20"/>
<path d="M978.2 489.5V500.5" fill="none" stroke="#555" stroke-width="1.08"/>
<path d="M1060 418L1087.6 403.3L1115.8 413.3L1119.9 418.2L1114 433.2L1117.4 458L1125.7 463V486.2L1115.8 492.8L1095.9 502.8L1070 512L1062 505Z" fill="#f8f8f8" stroke="#555" stroke-width="1.20"/>
<path d="M1087.6 403.3L1080 400M1066 418L1089 407L1113 416" fill="none" stroke="#666" stroke-width="0.96"/>
<circle cx="1092.5" cy="471.3" r="20.7" fill="#fafafa" stroke="#555" stroke-width="1.20"/>
<ellipse cx="1092.5" cy="473" rx="7.5" ry="9" fill="#fff" stroke="#555" stroke-width="1.20"/>
<circle cx="1091.7" cy="449.7" r="8.5" fill="#eee" stroke="#444" stroke-width="1.20"/>
<circle cx="1091.7" cy="449.7" r="4.2" fill="#aaa" stroke="#444" stroke-width="1.08"/>
<circle cx="1091.7" cy="449.7" r="1.8" fill="#555"/>
<ellipse cx="1091.7" cy="429.8" rx="6.5" ry="9" fill="#fff" stroke="#555" stroke-width="1.44"/>
<ellipse cx="1091.7" cy="487.8" rx="3.5" ry="3.5" fill="#fff" stroke="#555" stroke-width="1.08"/>
<path d="M1117.4 458V488M1121 461V487" fill="none" stroke="#555" stroke-width="1.08"/>
<ellipse cx="1121.5" cy="462.5" rx="4" ry="2" fill="#eee" stroke="#555" stroke-width="1.08"/>
<path d="M1079.7 512V515A5 3 0 0 0 1089.7 515V512" fill="#bbb" stroke="#444" stroke-width="0.96"/>
<ellipse cx="1084.7" cy="512" rx="5" ry="3" fill="#d6d6d6" stroke="#444" stroke-width="1.08"/>
<ellipse cx="1084.7" cy="512" rx="2.25" ry="1.35" fill="#777" stroke="#444" stroke-width="0.96"/>
<circle cx="1074" cy="448" r="1.3" fill="#3a3a3a"/>
<circle cx="1074" cy="462" r="1.3" fill="#3a3a3a"/>
<circle cx="1072" cy="480" r="1.3" fill="#3a3a3a"/>
<circle cx="1078" cy="494" r="1.3" fill="#3a3a3a"/>
<circle cx="1088" cy="498" r="1.3" fill="#3a3a3a"/>
<circle cx="1104" cy="493" r="1.3" fill="#3a3a3a"/>
<circle cx="1110" cy="478" r="1.3" fill="#3a3a3a"/>
<circle cx="1111" cy="460" r="1.3" fill="#3a3a3a"/>
<circle cx="1107" cy="444" r="1.3" fill="#3a3a3a"/>
<circle cx="1102" cy="432" r="1.3" fill="#3a3a3a"/>
<circle cx="1080" cy="437" r="1.3" fill="#3a3a3a"/>
<circle cx="1071" cy="430" r="1.3" fill="#3a3a3a"/>
<circle cx="1106" cy="420" r="1.3" fill="#3a3a3a"/>
<circle cx="1097" cy="411" r="1.3" fill="#3a3a3a"/>
<circle cx="1080" cy="414" r="1.3" fill="#3a3a3a"/>
<circle cx="1068" cy="500" r="1.3" fill="#3a3a3a"/>
<circle cx="1113" cy="448" r="1.3" fill="#3a3a3a"/>
<circle cx="1099" cy="505" r="1.3" fill="#3a3a3a"/>
<circle cx="1063" cy="470" r="1.3" fill="#3a3a3a"/>
<circle cx="1064" cy="490" r="1.3" fill="#3a3a3a"/>
<circle cx="1072" cy="419" r="2.2" fill="#cfcfcf" stroke="#444" stroke-width="1.08"/>
<circle cx="1072" cy="419" r="0.9900000000000001" fill="#555"/>
<circle cx="1112" cy="421" r="2.2" fill="#cfcfcf" stroke="#444" stroke-width="1.08"/>
<circle cx="1112" cy="421" r="0.9900000000000001" fill="#555"/>
<circle cx="1117" cy="440" r="2.2" fill="#cfcfcf" stroke="#444" stroke-width="1.08"/>
<circle cx="1117" cy="440" r="0.9900000000000001" fill="#555"/>
<circle cx="1117" cy="482" r="2.2" fill="#cfcfcf" stroke="#444" stroke-width="1.08"/>
<circle cx="1117" cy="482" r="0.9900000000000001" fill="#555"/>
<circle cx="1066" cy="494" r="2.2" fill="#cfcfcf" stroke="#444" stroke-width="1.08"/>
<circle cx="1066" cy="494" r="0.9900000000000001" fill="#555"/>
<circle cx="1104" cy="499" r="2.2" fill="#cfcfcf" stroke="#444" stroke-width="1.08"/>
<circle cx="1104" cy="499" r="0.9900000000000001" fill="#555"/>
<path d="M1040 406Q1046 412 1050 420M1036 410L1046 418" fill="none" stroke="#555" stroke-width="1.68"/>
<path d="M1047 438V470M1050 440L1052 470" fill="none" stroke="#555" stroke-width="1.20"/>
<path d="M1049 404L1060 402L1061 414L1050 416Z" fill="#ddd" stroke="#444" stroke-width="1.08"/>
<path d="M1050 405L1060 403.5" fill="none" stroke="#444" stroke-width="0.72"/>
<path d="M1050 407L1060 405.5" fill="none" stroke="#444" stroke-width="0.72"/>
<path d="M1050 409L1060 407.5" fill="none" stroke="#444" stroke-width="0.72"/>
<path d="M1050 411L1060 409.5" fill="none" stroke="#444" stroke-width="0.72"/>
<path d="M1050 413L1060 411.5" fill="none" stroke="#444" stroke-width="0.72"/>
<path d="M995 425Q1005 415 1020 418M996 432Q1006 424 1018 426" fill="none" stroke="#666" stroke-width="0.96"/>
<path d="M992 440V500M996 442V498" fill="none" stroke="#777" stroke-width="0.84"/>
<path d="M1010 475L1020 485L1020 500M1015 472L1026 482" fill="none" stroke="#666" stroke-width="0.96"/>
<path d="M1004 495L1030 508M1008 490L1034 502" fill="none" stroke="#777" stroke-width="0.84"/>
<circle cx="994" cy="430" r="2.1" fill="#cfcfcf" stroke="#444" stroke-width="1.08"/>
<circle cx="994" cy="430" r="0.9450000000000001" fill="#555"/>
<circle cx="1017" cy="445" r="2.1" fill="#cfcfcf" stroke="#444" stroke-width="1.08"/>
<circle cx="1017" cy="445" r="0.9450000000000001" fill="#555"/>
<circle cx="1028" cy="472" r="2.1" fill="#cfcfcf" stroke="#444" stroke-width="1.08"/>
<circle cx="1028" cy="472" r="0.9450000000000001" fill="#555"/>
<circle cx="1040" cy="488" r="2.1" fill="#cfcfcf" stroke="#444" stroke-width="1.08"/>
<circle cx="1040" cy="488" r="0.9450000000000001" fill="#555"/>
<circle cx="1022" cy="505" r="2.1" fill="#cfcfcf" stroke="#444" stroke-width="1.08"/>
<circle cx="1022" cy="505" r="0.9450000000000001" fill="#555"/>
<circle cx="1049" cy="474" r="2.1" fill="#cfcfcf" stroke="#444" stroke-width="1.08"/>
<circle cx="1049" cy="474" r="0.9450000000000001" fill="#555"/>
<circle cx="1012" cy="512" r="2.1" fill="#cfcfcf" stroke="#444" stroke-width="1.08"/>
<circle cx="1012" cy="512" r="0.9450000000000001" fill="#555"/>
<circle cx="1035" cy="430" r="2.1" fill="#cfcfcf" stroke="#444" stroke-width="1.08"/>
<circle cx="1035" cy="430" r="0.9450000000000001" fill="#555"/>
<circle cx="1059" cy="445" r="2.1" fill="#cfcfcf" stroke="#444" stroke-width="1.08"/>
<circle cx="1059" cy="445" r="0.9450000000000001" fill="#555"/>
<circle cx="1055" cy="490" r="2.1" fill="#cfcfcf" stroke="#444" stroke-width="1.08"/>
<circle cx="1055" cy="490" r="0.9450000000000001" fill="#555"/>
<circle cx="1008" cy="430" r="2.1" fill="#cfcfcf" stroke="#444" stroke-width="1.08"/>
<circle cx="1008" cy="430" r="0.9450000000000001" fill="#555"/>
<circle cx="1000" cy="445" r="1.4" fill="#3a3a3a"/>
<circle cx="1015" cy="480" r="1.4" fill="#3a3a3a"/>
<circle cx="1030" cy="490" r="1.4" fill="#3a3a3a"/>
<circle cx="1046" cy="432" r="1.4" fill="#3a3a3a"/>
<circle cx="1056" cy="460" r="1.4" fill="#3a3a3a"/>
<circle cx="1052" cy="505" r="1.4" fill="#3a3a3a"/>
<circle cx="1010" cy="496" r="1.4" fill="#3a3a3a"/>
<circle cx="1040" cy="470" r="1.4" fill="#3a3a3a"/>
<circle cx="997" cy="492" r="1.4" fill="#3a3a3a"/>
<circle cx="1024" cy="440" r="1.4" fill="#3a3a3a"/>
<circle cx="1064" cy="410" r="1.4" fill="#3a3a3a"/>
<circle cx="1068" cy="404" r="1.4" fill="#3a3a3a"/>
<path d="M1036 480L1046 476L1050 486L1040 490Z" fill="#e6e6e6" stroke="#444" stroke-width="1.08"/>
<path d="M1000 470Q996 476 1000 482L1008 480Q1010 474 1006 470Z" fill="#ddd" stroke="#444" stroke-width="1.08"/>
<path d="M1082 404L1060 418M1096 404L1088 407" fill="none" stroke="#555" stroke-width="1.08"/>
<path d="M1056 402Q1060 410 1068 412L1080 408" fill="none" stroke="#555" stroke-width="1.08"/>
<path d="M1058 360L1066 357V370L1058 372Z" fill="#eee" stroke="#555" stroke-width="0.96"/>
<path d="M1070 352L1082 347L1082 362M1072 360L1082 356" fill="none" stroke="#777" stroke-width="0.84"/>
<circle cx="1075.0796206312925" cy="458.21468118226414" r="1.2" fill="#3a3a3a"/>
<circle cx="1069.6474073737531" cy="436.9469287877016" r="1.0" fill="#3a3a3a"/>
<circle cx="1096.3216105146607" cy="496.81881018527395" r="1.0" fill="#3a3a3a"/>
<circle cx="1103.0042584348444" cy="469.55910205490943" r="1.0" fill="#3a3a3a"/>
<circle cx="1067.5730663101313" cy="425.4012428053888" r="1.2" fill="#3a3a3a"/>
<circle cx="1099.977085097171" cy="485.3670574674108" r="1.5" fill="#3a3a3a"/>
<circle cx="1090.4318669993995" cy="491.92756710889023" r="1.2" fill="#3a3a3a"/>
<circle cx="1102.4175024751507" cy="456.9768615250928" r="1.0" fill="#3a3a3a"/>
<circle cx="1114.4129329695718" cy="478.19658139279085" r="1.5" fill="#3a3a3a"/>
<circle cx="1109.4794029428062" cy="458.3142334184205" r="1.0" fill="#3a3a3a"/>
<circle cx="1068.2134099735956" cy="484.1613644138615" r="2.0" fill="#ccc" stroke="#444" stroke-width="0.96"/>
<circle cx="1070.4681863098965" cy="435.6720951007633" r="1.0" fill="#3a3a3a"/>
<circle cx="1064.0326962233341" cy="427.3911763024203" r="1.0" fill="#3a3a3a"/>
<circle cx="1092.19923656082" cy="505.99661199977777" r="2.0" fill="#ccc" stroke="#444" stroke-width="0.96"/>
<circle cx="1075.9094080232878" cy="474.8407352381729" r="1.5" fill="#3a3a3a"/>
<circle cx="1069.2286519011302" cy="439.9237337972615" r="2.0" fill="#ccc" stroke="#444" stroke-width="0.96"/>
<circle cx="1109.4824310196254" cy="418.03515130079415" r="1.2" fill="#3a3a3a"/>
<circle cx="1106.4209617530016" cy="407.11741140566113" r="2.0" fill="#ccc" stroke="#444" stroke-width="0.96"/>
<circle cx="1111.8212907106386" cy="424.12316907623335" r="1.2" fill="#3a3a3a"/>
<circle cx="1107.913652942861" cy="419.35864253909523" r="2.0" fill="#ccc" stroke="#444" stroke-width="0.96"/>
<circle cx="1070.9904792583823" cy="448.91707295913494" r="1.2" fill="#3a3a3a"/>
<circle cx="1064.0282545103705" cy="494.16206211622625" r="1.5" fill="#3a3a3a"/>
<circle cx="1075.2384416435395" cy="507.57524348159467" r="1.0" fill="#3a3a3a"/>
<circle cx="1090.4925008676696" cy="406.9766743392821" r="1.5" fill="#3a3a3a"/>
<circle cx="1113.817368669655" cy="445.38933547948784" r="1.0" fill="#3a3a3a"/>
<circle cx="1069.4070303777157" cy="465.4389494130903" r="1.2" fill="#3a3a3a"/>
<circle cx="1064.9305444067495" cy="443.6048708998696" r="2.0" fill="#ccc" stroke="#444" stroke-width="0.96"/>
<circle cx="1071.6332655366366" cy="465.9016694675379" r="1.2" fill="#3a3a3a"/>
<circle cx="1115.9915400681334" cy="424.64842700942586" r="1.2" fill="#3a3a3a"/>
<circle cx="1082.6486772783505" cy="429.2951035754069" r="1.2" fill="#3a3a3a"/>
<circle cx="1107.523457880229" cy="422.1645224200285" r="1.2" fill="#3a3a3a"/>
<circle cx="1105.21844021237" cy="445.59741368877405" r="2.0" fill="#ccc" stroke="#444" stroke-width="0.96"/>
<circle cx="1070.230380881897" cy="409.9470401127658" r="1.5" fill="#3a3a3a"/>
<circle cx="1078.304431560559" cy="477.86710497695447" r="1.5" fill="#3a3a3a"/>
<circle cx="1089.2489181564977" cy="498.2920541378823" r="2.0" fill="#ccc" stroke="#444" stroke-width="0.96"/>
<circle cx="1081.6061207890841" cy="423.89420647011764" r="1.0" fill="#3a3a3a"/>
<circle cx="1071.5840104647261" cy="454.888590522523" r="1.0" fill="#3a3a3a"/>
<circle cx="1080.8131635542513" cy="499.57073820624265" r="1.2" fill="#3a3a3a"/>
<circle cx="1108.939106710214" cy="413.0537410636081" r="2.0" fill="#ccc" stroke="#444" stroke-width="0.96"/>
<circle cx="1090.7423311989296" cy="412.16646874511997" r="1.2" fill="#3a3a3a"/>
<path d="M1066 440Q1075 425 1088 420M1116 440Q1110 425 1098 420M1070 500Q1090 510 1112 496" fill="none" stroke="#555" stroke-width="0.96"/>
<path d="M1102 456Q1112 470 1106 488M1080 456Q1072 470 1078 488" fill="none" stroke="#666" stroke-width="0.84"/>
<circle cx="1092.5" cy="471.3" r="23.5" fill="none" stroke="#777" stroke-width="0.84"/>
<path d="M1058 352L1082 341V350L1058 361Z" fill="#d8d8d8" stroke="#555" stroke-width="0.96"/>
<path d="M1059 353L1081 343" fill="none" stroke="#666" stroke-width="0.72"/>
<path d="M1059 355L1081 345" fill="none" stroke="#666" stroke-width="0.72"/>
<path d="M1059 357L1081 347" fill="none" stroke="#666" stroke-width="0.72"/>
<path d="M1059 359L1081 349" fill="none" stroke="#666" stroke-width="0.72"/>
<path d="M1040 356L1056 362M1040 362L1056 368" fill="none" stroke="#555" stroke-width="0.96"/>
<circle cx="1062" cy="375" r="1.3" fill="#3a3a3a"/>
<circle cx="1078" cy="372" r="1.3" fill="#3a3a3a"/>
<circle cx="1090" cy="360" r="1.3" fill="#3a3a3a"/>
<circle cx="1070" cy="360" r="1.3" fill="#3a3a3a"/>
<circle cx="1090" cy="390" r="1.3" fill="#3a3a3a"/>
<path d="M1036 524 L1036 565" fill="none" stroke="#666" stroke-width="0.96" stroke-dasharray="5 2 1.5 2"/>
<path d="M929 388.6Q925 405 923.3 424.9Q920.5 445 920.8 455Q921.5 465 922.6 469.7Q924 482 924.3 494" fill="none" stroke="#444" stroke-width="5.52"/>
<path d="M929 388.6Q925 405 923.3 424.9Q920.5 445 920.8 455Q921.5 465 922.6 469.7Q924 482 924.3 494" fill="none" stroke="#bbb" stroke-width="2.88" stroke-dasharray="1.1 0.9"/>
<ellipse cx="929" cy="388.6" rx="2.2" ry="1.2" fill="#ddd" stroke="#444" stroke-width="0.96"/>
<path d="M915.5 501V505A4 2 0 0 0 923.5 505V501" fill="#e6e6e6" stroke="#555" stroke-width="1.08"/>
<ellipse cx="919.5" cy="501" rx="4" ry="2" fill="#e6e6e6" stroke="#555" stroke-width="1.08"/>
<path d="M914 505V524Q923 530 932 524V505Z" fill="#f4f4f4" stroke="#555" stroke-width="1.08"/>
<path d="M914 512Q923 517 932 512M914 515.5Q923 520.5 932 515.5" fill="none" stroke="#777" stroke-width="0.84"/>
<ellipse cx="923" cy="505" rx="9" ry="3.4" fill="#f6f6f6" stroke="#555" stroke-width="1.08"/>
<path d="M919.5 528V533" fill="none" stroke="#555" stroke-width="1.44"/>
<path d="M919.5 537L930 535Q934 539 932 546L920 548Z" fill="#eee" stroke="#555" stroke-width="1.08"/>
<ellipse cx="930.5" cy="541" rx="3.2" ry="3.8" fill="#ccc" stroke="#555" stroke-width="0.96"/>
<path d="M921 549L946 541L950 534L963 530L965 536L955 545L932 556Q921 558 921 549Z" fill="#f2f2f2" stroke="#555" stroke-width="1.08"/>
<path d="M950 534L966 530V542L951 546Z" fill="#e0e0e0" stroke="#555" stroke-width="1.08"/>
<path d="M952 535L964 532" fill="none" stroke="#555" stroke-width="1.08"/>
<path d="M952 538L964 535" fill="none" stroke="#555" stroke-width="1.08"/>
<path d="M952 541L964 538" fill="none" stroke="#555" stroke-width="1.08"/>
<path d="M957.4 550V553A3.6 3 0 0 0 964.6 553V550" fill="#999" stroke="#444" stroke-width="0.96"/>
<ellipse cx="961" cy="550" rx="3.6" ry="3" fill="#d6d6d6" stroke="#444" stroke-width="1.08"/>
<ellipse cx="961" cy="550" rx="1.62" ry="1.35" fill="#777" stroke="#444" stroke-width="0.96"/>
<circle cx="927" cy="549" r="3" fill="#ccc" stroke="#555" stroke-width="0.96"/>
<path d="M918 532H938.8M918 532V557H938.6V552" fill="none" stroke="#666" stroke-width="0.84"/>
<path d="M945.5 499V510" fill="none" stroke="#777" stroke-width="0.72"/>
<path d="M942.2 513V515.5A3.3 2.4 0 0 0 948.8 515.5V513" fill="#888" stroke="#444" stroke-width="0.96"/>
<ellipse cx="945.5" cy="513" rx="3.3" ry="2.4" fill="#d6d6d6" stroke="#444" stroke-width="1.08"/>
<ellipse cx="945.5" cy="513" rx="1.4849999999999999" ry="1.08" fill="#777" stroke="#444" stroke-width="0.96"/>
<path d="M942.2 521V523A3.3 2.4 0 0 0 948.8 523V521" fill="#aaa" stroke="#444" stroke-width="0.96"/>
<ellipse cx="945.5" cy="521" rx="3.3" ry="2.4" fill="#d6d6d6" stroke="#444" stroke-width="1.08"/>
<ellipse cx="945.5" cy="521" rx="1.4849999999999999" ry="1.08" fill="#777" stroke="#444" stroke-width="0.96"/>
<path d="M937.5 560V564L940 566L942.5 564V560Z" fill="#eee" stroke="#555" stroke-width="0.96"/>
<path d="M938 554.5L942 554.5L942 560H938Z" fill="#444"/>
<path d="M940 552 L977 526" fill="none" stroke="#666" stroke-width="0.96" stroke-dasharray="5 2 1.5 2"/>
<path d="M944 530 L977 510" fill="none" stroke="#666" stroke-width="0.96" stroke-dasharray="5 2 1.5 2"/>
<path d="M927.5 556Q925 574 936 584Q945 589 958.8 591" fill="none" stroke="#444" stroke-width="6.24"/>
<path d="M927.5 556Q925 574 936 584Q945 589 958.8 591" fill="none" stroke="#fff" stroke-width="3.60"/>
<ellipse cx="959" cy="591" rx="1.8" ry="2.6" fill="#ddd" stroke="#555" stroke-width="0.96"/>
<path d="M962.1 594V595.2A2.6 3.2 0 0 0 967.3000000000001 595.2V594" fill="#bbb" stroke="#444" stroke-width="0.96"/>
<ellipse cx="964.7" cy="594" rx="2.6" ry="3.2" fill="#d6d6d6" stroke="#444" stroke-width="1.08"/>
<ellipse cx="964.7" cy="594" rx="1.1700000000000002" ry="1.4400000000000002" fill="#777" stroke="#444" stroke-width="0.96"/>
<path d="M970 596L986 604L984 608L968 600Z" fill="#eee" stroke="#555" stroke-width="0.96"/>
<circle cx="972" cy="598" r="2.1" fill="#ddd" stroke="#555" stroke-width="0.96"/>
<circle cx="977" cy="601" r="2.1" fill="#ddd" stroke="#555" stroke-width="0.96"/>
<circle cx="982" cy="603.5" r="2.1" fill="#ddd" stroke="#555" stroke-width="0.96"/>
<path d="M985.7 606V607A2.3 2.3 0 0 0 990.3 607V606" fill="#888" stroke="#444" stroke-width="0.96"/>
<ellipse cx="988" cy="606" rx="2.3" ry="2.3" fill="#d6d6d6" stroke="#444" stroke-width="1.08"/>
<ellipse cx="988" cy="606" rx="1.035" ry="1.035" fill="#777" stroke="#444" stroke-width="0.96"/>
<path d="M991 606Q1000 613 1008 609L1011.5 604" fill="none" stroke="#444" stroke-width="4.56"/>
<path d="M991 606Q1000 613 1008 609L1011.5 604" fill="none" stroke="#fff" stroke-width="2.40"/>
<path d="M1032 566L1042 566L1044 572Q1037 576 1031 572Z" fill="#ddd" stroke="#555" stroke-width="1.08"/>
<ellipse cx="1037" cy="566" rx="5" ry="2.5" fill="#eee" stroke="#555" stroke-width="1.08"/>
<path d="M1037 575 L1030 592 L1014 606" fill="none" stroke="#666" stroke-width="0.96" stroke-dasharray="5 2 1.5 2"/>
<path d="M842 504L856 498Q862 496 866 503L870 518Q868 523 860 524L851 533Q846 537 844 533L846 520L840 512Z" fill="#f2f2f2" stroke="#555" stroke-width="1.08"/>
<circle cx="848" cy="528" r="2" fill="#ccc" stroke="#555" stroke-width="0.96"/>
<circle cx="858" cy="509" r="2.2" fill="#ccc" stroke="#555" stroke-width="0.96"/>
<circle cx="866" cy="517" r="2" fill="#ccc" stroke="#555" stroke-width="0.96"/>
<path d="M850 506L862 520M853 503L866 513" fill="none" stroke="#777" stroke-width="0.84"/>
<path d="M836 497L846 492" stroke="#444" stroke-width="4.08"/>
<path d="M836 497L846 492" stroke="#ccc" stroke-width="1.92" stroke-dasharray="0.8 0.8"/>
<circle cx="835.5" cy="497.5" r="2.4" fill="#bbb" stroke="#444" stroke-width="0.96"/>
<path d="M847.2 489.5V490.5A2.3 2.8 0 0 0 851.8 490.5V489.5" fill="#aaa" stroke="#444" stroke-width="0.96"/>
<ellipse cx="849.5" cy="489.5" rx="2.3" ry="2.8" fill="#d6d6d6" stroke="#444" stroke-width="1.08"/>
<ellipse cx="849.5" cy="489.5" rx="1.035" ry="1.26" fill="#777" stroke="#444" stroke-width="0.96"/>
<path d="M852 488 L860 486 L860 505" fill="none" stroke="#666" stroke-width="0.96" stroke-dasharray="5 2 1.5 2"/>
<path d="M868 573V576A3 2.4 0 0 0 874 576V573" fill="#ccc" stroke="#444" stroke-width="0.96"/>
<ellipse cx="871" cy="573" rx="3" ry="2.4" fill="#d6d6d6" stroke="#444" stroke-width="1.08"/>
<ellipse cx="871" cy="573" rx="1.35" ry="1.08" fill="#777" stroke="#444" stroke-width="0.96"/>
<path d="M858 583Q864 580 869 586L868 595Q862 597 858 592Z" fill="#f4f4f4" stroke="#555" stroke-width="1.08"/>
<circle cx="863" cy="592" r="3.2" fill="#fff" stroke="#555" stroke-width="1.08"/>
<path d="M863 599V601A3 2 0 0 0 869 601V599" fill="#999" stroke="#444" stroke-width="0.96"/>
<ellipse cx="866" cy="599" rx="3" ry="2" fill="#d6d6d6" stroke="#444" stroke-width="1.08"/>
<ellipse cx="866" cy="599" rx="1.35" ry="0.9" fill="#777" stroke="#444" stroke-width="0.96"/>
<path d="M863 603H868V614H863Z" fill="#aaa" stroke="#444" stroke-width="0.96"/>
<ellipse cx="865.5" cy="614" rx="2.8" ry="1.8" fill="#ccc" stroke="#444" stroke-width="0.96"/>
<path d="M868 576 L866 600" fill="none" stroke="#666" stroke-width="0.96" stroke-dasharray="5 2 1.5 2"/>
</svg>
<div class="abs" style="left:558px;top:341px;font-size:36px;line-height:44px;font-weight:bold;color:#c9a21f;transform:scaleX(0.995);transform-origin:0 0;white-space:nowrap">machinecatalogic.com</div>

<div id="status" class="abs">
<div class="abs" style="left:0;top:0;width:111px;height:15px;background:#e4e4e4"></div>
<div class="abs" style="left:20px;top:1.3px;font-size:12px;line-height:15px;color:#333;transform:scaleX(0.92);transform-origin:0 0">11,69 x 8,27 in</div>
<div class="abs" style="left:128px;top:6px;width:422px;height:2.5px;background:#777"></div>
</div>
<div id="vscroll" class="abs"><div class="abs" style="left:0;top:0;width:16px;height:8px;background:#dcdcdc"></div><div class="abs" style="left:6.5px;top:504px;width:2px;height:17px;background:#666"></div></div>
<div id="divR" class="abs"><svg style="left:5px;top:332px" width="6" height="10"><path d="M6 0V10L0 5Z" fill="#666"/></svg></div>
<div id="taskbar" class="abs"></div>
</body></html>
